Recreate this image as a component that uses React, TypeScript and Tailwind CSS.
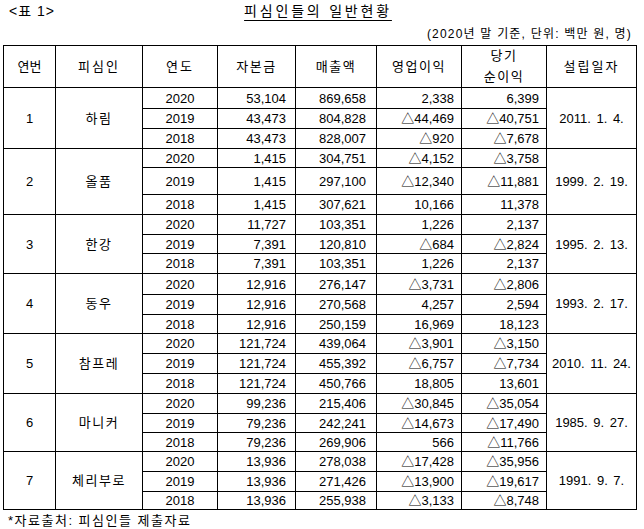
import React from "react";

type Row = { year: string; cap: string; sales: string; op: string; net: string; h: number };
type Group = { no: string; name: string; date: string; rows: Row[] };

const groups: Group[] = [
  {
    no: "1", name: "하림", date: "2011. 1. 4.",
    rows: [
      { year: "2020", cap: "53,104", sales: "869,658", op: "2,338", net: "6,399", h: 21 },
      { year: "2019", cap: "43,473", sales: "804,828", op: "△44,469", net: "△40,751", h: 20 },
      { year: "2018", cap: "43,473", sales: "828,007", op: "△920", net: "△7,678", h: 20 },
    ],
  },
  {
    no: "2", name: "올품", date: "1999. 2. 19.",
    rows: [
      { year: "2020", cap: "1,415", sales: "304,751", op: "△4,152", net: "△3,758", h: 19 },
      { year: "2019", cap: "1,415", sales: "297,100", op: "△12,340", net: "△11,881", h: 27 },
      { year: "2018", cap: "1,415", sales: "307,621", op: "10,166", net: "11,378", h: 20 },
    ],
  },
  {
    no: "3", name: "한강", date: "1995. 2. 13.",
    rows: [
      { year: "2020", cap: "11,727", sales: "103,351", op: "1,226", net: "2,137", h: 20 },
      { year: "2019", cap: "7,391", sales: "120,810", op: "△684", net: "△2,824", h: 19 },
      { year: "2018", cap: "7,391", sales: "103,351", op: "1,226", net: "2,137", h: 20 },
    ],
  },
  {
    no: "4", name: "동우", date: "1993. 2. 17.",
    rows: [
      { year: "2020", cap: "12,916", sales: "276,147", op: "△3,731", net: "△2,806", h: 21 },
      { year: "2019", cap: "12,916", sales: "270,568", op: "4,257", net: "2,594", h: 20 },
      { year: "2018", cap: "12,916", sales: "250,159", op: "16,969", net: "18,123", h: 19 },
    ],
  },
  {
    no: "5", name: "참프레", date: "2010. 11. 24.",
    rows: [
      { year: "2020", cap: "121,724", sales: "439,064", op: "△3,901", net: "△3,150", h: 20 },
      { year: "2019", cap: "121,724", sales: "455,392", op: "△6,757", net: "△7,734", h: 20 },
      { year: "2018", cap: "121,724", sales: "450,766", op: "18,805", net: "13,601", h: 20 },
    ],
  },
  {
    no: "6", name: "마니커", date: "1985. 9. 27.",
    rows: [
      { year: "2020", cap: "99,236", sales: "215,406", op: "△30,845", net: "△35,054", h: 20 },
      { year: "2019", cap: "79,236", sales: "242,241", op: "△14,673", net: "△17,490", h: 19 },
      { year: "2018", cap: "79,236", sales: "269,906", op: "566", net: "△11,766", h: 19 },
    ],
  },
  {
    no: "7", name: "체리부로", date: "1991. 9. 7.",
    rows: [
      { year: "2020", cap: "13,936", sales: "278,038", op: "△17,428", net: "△35,956", h: 20 },
      { year: "2019", cap: "13,936", sales: "271,426", op: "△13,900", net: "△19,617", h: 20 },
      { year: "2018", cap: "13,936", sales: "255,938", op: "△3,133", net: "△8,748", h: 18 },
    ],
  },
];

const font = { fontFamily: "'Liberation Sans', 'Noto Sans CJK KR', sans-serif" };

export default function App() {
  const td = "border border-black p-0 leading-none";
  return (
    <div className="w-[644px] h-[529px] bg-white text-black text-[13px]" style={font}>
      <div className="grid grid-cols-[1fr_auto_1fr] items-start pt-[4px] h-[28px]">
        <div className="pl-[9px] text-[14px] leading-[14px] tracking-[1px]">&lt;표 1&gt;</div>
        <div className="text-[14px] leading-[14px] tracking-[2.8px] underline underline-offset-[4px] pr-[8px]">
          피심인들의 일반현황
        </div>
        <div />
      </div>
      <div className="flex justify-end pr-[12px] h-[17px] text-[12px] leading-[12px] tracking-[1.2px]">
        (2020년 말 기준, 단위: 백만 원, 명)
      </div>
      <table className="ml-[3px] border-collapse table-fixed w-[633px]">
        <colgroup>
          <col className="w-[52px]" />
          <col className="w-[87px]" />
          <col className="w-[75px]" />
          <col className="w-[78px]" />
          <col className="w-[81px]" />
          <col className="w-[85px]" />
          <col className="w-[85px]" />
          <col className="w-[90px]" />
        </colgroup>
        <thead>
          <tr className="h-[41px]">
            <th className={`${td} font-normal text-center`}>연번</th>
            <th className={`${td} font-normal text-center tracking-[2px]`}>피심인</th>
            <th className={`${td} font-normal text-center tracking-[2px]`}>연도</th>
            <th className={`${td} font-normal text-center tracking-[1.5px]`}>자본금</th>
            <th className={`${td} font-normal text-center tracking-[1.5px]`}>매출액</th>
            <th className={`${td} font-normal text-center tracking-[1.5px]`}>영업이익</th>
            <th className={`${td} font-normal text-center tracking-[1.5px]`}>
              <div className="flex flex-col items-center leading-[21px] -mt-[1px]">
                <span>당기</span>
                <span>순이익</span>
              </div>
            </th>
            <th className={`${td} font-normal text-center tracking-[2px]`}>설립일자</th>
          </tr>
        </thead>
        <tbody>
          {groups.map((g) =>
            g.rows.map((r, i) => (
              <tr key={g.no + r.year} style={{ height: r.h }}>
                {i === 0 && (
                  <>
                    <td rowSpan={3} className={`${td} text-center`}>{g.no}</td>
                    <td rowSpan={3} className={`${td} text-center tracking-[1.5px]`}>{g.name}</td>
                  </>
                )}
                <td className={`${td} text-center`}>{r.year}</td>
                <td className={`${td} text-right pr-[9px]`}>{r.cap}</td>
                <td className={`${td} text-right pr-[10px]`}>{r.sales}</td>
                <td className={`${td} text-right pr-[7px]`}>{r.op}</td>
                <td className={`${td} text-right pr-[7px]`}>{r.net}</td>
                {i === 0 && (
                  <td rowSpan={3} className={`${td} text-center whitespace-nowrap [word-spacing:2px]`}>{g.date}</td>
                )}
              </tr>
            ))
          )}
        </tbody>
      </table>
      <div className="pl-[8px] pt-[3px] text-[13px] leading-[15px] tracking-[1.5px]">*자료출처: 피심인들 제출자료</div>
    </div>
  );
}
